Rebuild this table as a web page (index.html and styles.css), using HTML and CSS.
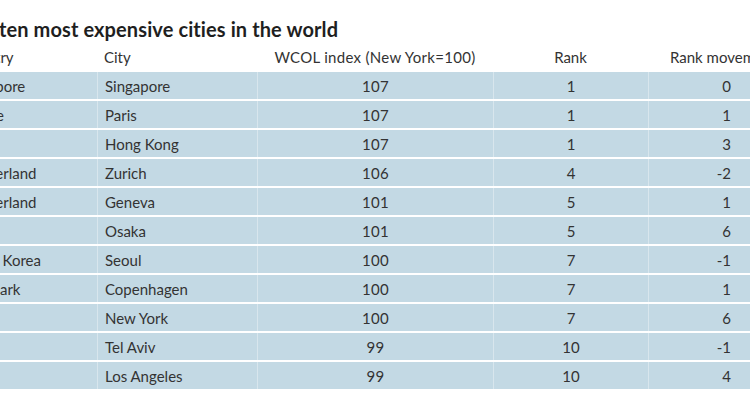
FILE: index.html
```html
<!DOCTYPE html>
<html>
<head>
<meta charset="utf-8">
<link rel="stylesheet" href="styles.css">
</head>
<body>
<div class="frame">
  <div class="chart">
    <h1 class="title">The ten most expensive cities in the world</h1>
    <table class="table">
      <colgroup>
        <col class="w-country">
        <col class="w-city">
        <col class="w-index">
        <col class="w-rank">
        <col class="w-move">
      </colgroup>
      <thead>
        <tr>
          <th class="c-country">Country</th>
          <th class="c-city">City</th>
          <th class="c-index">WCOL index (New York=100)</th>
          <th class="c-rank">Rank</th>
          <th class="c-move-h">Rank movement</th>
        </tr>
      </thead>
      <tbody>
        <tr><td class="c-country">Singapore</td><td class="c-city">Singapore</td><td class="c-index">107</td><td class="c-rank">1</td><td class="c-move">0</td></tr>
        <tr><td class="c-country">France</td><td class="c-city">Paris</td><td class="c-index">107</td><td class="c-rank">1</td><td class="c-move">1</td></tr>
        <tr><td class="c-country">China</td><td class="c-city">Hong Kong</td><td class="c-index">107</td><td class="c-rank">1</td><td class="c-move">3</td></tr>
        <tr><td class="c-country">Switzerland</td><td class="c-city">Zurich</td><td class="c-index">106</td><td class="c-rank">4</td><td class="c-move">-2</td></tr>
        <tr><td class="c-country">Switzerland</td><td class="c-city">Geneva</td><td class="c-index">101</td><td class="c-rank">5</td><td class="c-move">1</td></tr>
        <tr><td class="c-country">Japan</td><td class="c-city">Osaka</td><td class="c-index">101</td><td class="c-rank">5</td><td class="c-move">6</td></tr>
        <tr><td class="c-country">South Korea</td><td class="c-city">Seoul</td><td class="c-index">100</td><td class="c-rank">7</td><td class="c-move">-1</td></tr>
        <tr><td class="c-country">Denmark</td><td class="c-city">Copenhagen</td><td class="c-index">100</td><td class="c-rank">7</td><td class="c-move">1</td></tr>
        <tr><td class="c-country">US</td><td class="c-city">New York</td><td class="c-index">100</td><td class="c-rank">7</td><td class="c-move">6</td></tr>
        <tr><td class="c-country">Israel</td><td class="c-city">Tel Aviv</td><td class="c-index">99</td><td class="c-rank">10</td><td class="c-move">-1</td></tr>
        <tr><td class="c-country">US</td><td class="c-city">Los Angeles</td><td class="c-index">99</td><td class="c-rank">10</td><td class="c-move">4</td></tr>
      </tbody>
    </table>
  </div>
</div>
</body>
</html>
```

FILE: styles.css
```css
html, body {
  margin: 0;
  padding: 0;
  background: #ffffff;
}

.frame {
  width: 750px;
  height: 410px;
  overflow: hidden;
}

.chart {
  margin-left: -60px;
  width: 810px;
  font-family: Lato, "Open Sans", sans-serif;
  color: #333333;
}

.title {
  margin: 0;
  padding: 17px 0 0 20px;
  height: 24px;
  font-size: 20px;
  line-height: 24px;
  font-weight: 700;
  color: #1f1f1f;
  letter-spacing: 0.1px;
  white-space: nowrap;
}

.table {
  border-collapse: separate;
  border-spacing: 0 2px;
  table-layout: fixed;
  width: 810px;
  margin: 0;
  font-size: 15px;
}

.w-country { width: 157px; }
.w-city { width: 160px; }
.w-index { width: 236px; }
.w-rank { width: 155px; }
.w-move { width: 102px; }

.table th {
  font-weight: 400;
  height: 27px;
  padding: 0;
  vertical-align: middle;
  white-space: nowrap;
  overflow: visible;
}

.table td {
  background: #c3d9e4;
  height: 27px;
  padding: 0;
  vertical-align: middle;
  white-space: nowrap;
}

.table td + td {
  border-left: 1px solid rgba(255, 255, 255, 0.35);
}

.table .c-country { padding-left: 20px; text-align: left; }
.table .c-city { padding-left: 7px; text-align: left; }
.table .c-index { text-align: center; letter-spacing: 0.3px; }
.table .c-rank { text-align: center; }
.table .c-move { padding-right: 19px; text-align: right; }
.table .c-move-h { padding-left: 22px; text-align: left; }
```
